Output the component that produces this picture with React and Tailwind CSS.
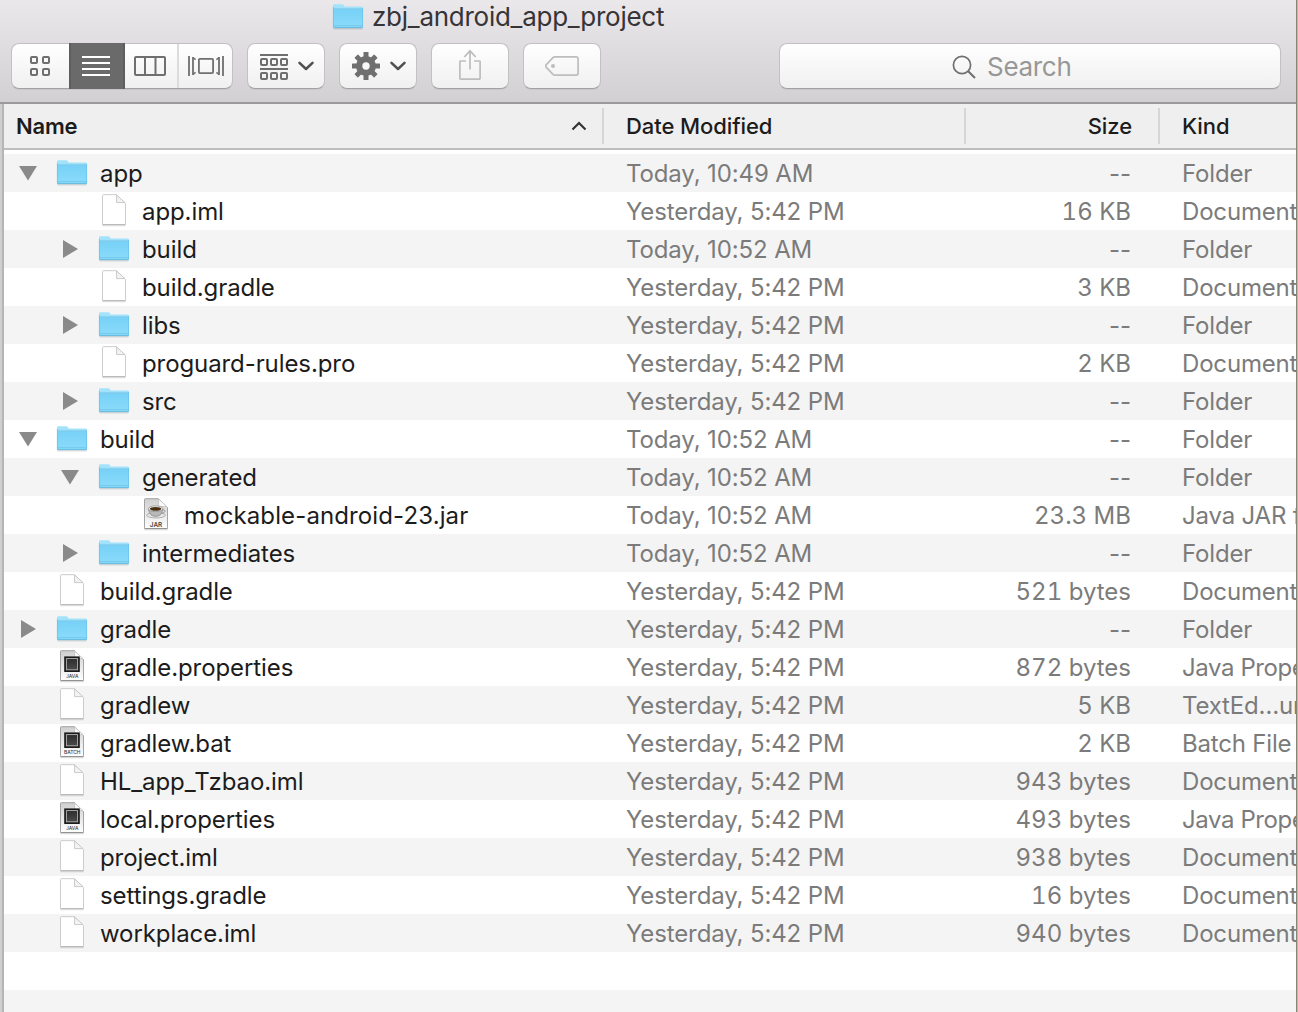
const rows = [
  [0, 'down', 'folder', 'app', 'Today, 10:49 AM', '--', 'Folder'],
  [1, '', 'file', 'app.iml', 'Yesterday, 5:42 PM', '16 KB', 'Document'],
  [1, 'right', 'folder', 'build', 'Today, 10:52 AM', '--', 'Folder'],
  [1, '', 'file', 'build.gradle', 'Yesterday, 5:42 PM', '3 KB', 'Document'],
  [1, 'right', 'folder', 'libs', 'Yesterday, 5:42 PM', '--', 'Folder'],
  [1, '', 'file', 'proguard-rules.pro', 'Yesterday, 5:42 PM', '2 KB', 'Document'],
  [1, 'right', 'folder', 'src', 'Yesterday, 5:42 PM', '--', 'Folder'],
  [0, 'down', 'folder', 'build', 'Today, 10:52 AM', '--', 'Folder'],
  [1, 'down', 'folder', 'generated', 'Today, 10:52 AM', '--', 'Folder'],
  [2, '', 'jar', 'mockable-android-23.jar', 'Today, 10:52 AM', '23.3 MB', 'Java JAR file'],
  [1, 'right', 'folder', 'intermediates', 'Today, 10:52 AM', '--', 'Folder'],
  [0, '', 'file', 'build.gradle', 'Yesterday, 5:42 PM', '521 bytes', 'Document'],
  [0, 'right', 'folder', 'gradle', 'Yesterday, 5:42 PM', '--', 'Folder'],
  [0, '', 'java', 'gradle.properties', 'Yesterday, 5:42 PM', '872 bytes', 'Java Properties'],
  [0, '', 'file', 'gradlew', 'Yesterday, 5:42 PM', '5 KB', 'TextEd…ument'],
  [0, '', 'batch', 'gradlew.bat', 'Yesterday, 5:42 PM', '2 KB', 'Batch File'],
  [0, '', 'file', 'HL_app_Tzbao.iml', 'Yesterday, 5:42 PM', '943 bytes', 'Document'],
  [0, '', 'java', 'local.properties', 'Yesterday, 5:42 PM', '493 bytes', 'Java Properties'],
  [0, '', 'file', 'project.iml', 'Yesterday, 5:42 PM', '938 bytes', 'Document'],
  [0, '', 'file', 'settings.gradle', 'Yesterday, 5:42 PM', '16 bytes', 'Document'],
  [0, '', 'file', 'workplace.iml', 'Yesterday, 5:42 PM', '940 bytes', 'Document'],
];

const indents = ['pl-0', 'pl-[42px]', 'pl-[84px]'];

function Gradients() {
  return (
    <svg className="absolute size-0" aria-hidden="true">
      <defs>
        <linearGradient id="folderFront" x1="0" y1="0" x2="0" y2="1">
          <stop offset="0" stopColor="#77d1f7" />
          <stop offset="1" stopColor="#8cdcfa" />
        </linearGradient>
        <linearGradient id="docGrey" x1="0" y1="0" x2="0" y2="1">
          <stop offset="0" stopColor="#cfcfcf" />
          <stop offset="0.65" stopColor="#efefef" />
          <stop offset="1" stopColor="#fff" />
        </linearGradient>
        <linearGradient id="chip" x1="0" y1="0" x2="0" y2="1">
          <stop offset="0" stopColor="#2c2c2c" />
          <stop offset="1" stopColor="#4a4a4a" />
        </linearGradient>
      </defs>
    </svg>
  );
}

function FolderIcon() {
  return (
    <svg width="32" height="38" viewBox="0 0 32 38" className="shrink-0">
      <path d="M1.5 30.8h29" stroke="#000" strokeOpacity=".12" strokeWidth="1.4" />
      <path d="M1 29.2V7.4Q1 6.2 2.2 6.2H10.2Q11.2 6.2 11.8 7.2L12.6 8.4H29.8Q31 8.4 31 9.6V29.2Q31 30 30 30H2Q1 30 1 29.2Z" fill="#a3e2fb" />
      <path d="M1 11.4h30V29Q31 30 30 30H2Q1 30 1 29Z" fill="url(#folderFront)" />
      <path d="M1 11h30" stroke="#69bfe4" strokeWidth=".9" />
      <path d="M1 27.7h30" stroke="#69c0e6" strokeWidth=".7" />
      <path d="M1.4 9V29M30.6 10V29" stroke="#6cc3ea" strokeWidth=".8" />
      <path d="M1.2 29.7h29.6" stroke="#5fb2d8" strokeWidth=".9" />
    </svg>
  );
}

function DocIcon({ kind }) {
  const plain = kind === 'file';
  return (
    <svg width="32" height="38" viewBox="0 0 32 38" className="shrink-0">
      <path d="M4.2 33.6h23.6" stroke="#000" strokeOpacity=".13" strokeWidth="1.4" />
      <path
        d="M4.5 3.5Q4.5 2.7 5.3 2.7H18.5L27.5 11.5V31.8Q27.5 32.6 26.7 32.6H5.3Q4.5 32.6 4.5 31.8Z"
        fill={plain ? '#fff' : 'url(#docGrey)'}
        stroke={plain ? '#c6c6c6' : '#9a9a9a'}
        strokeWidth=".9"
      />
      <path d="M4.5 32.5h23" stroke={plain ? '#b5b5b5' : '#8d8d8d'} strokeWidth=".8" />
      <path d="M18.6 3V10.6H27Z" fill={plain ? '#f3f3f3' : '#fafafa'} stroke="#c4c4c4" strokeWidth=".9" />
      {(kind === 'java' || kind === 'batch') && (
        <g>
          <rect x="8.2" y="8.4" width="15.6" height="15.6" fill="#1c1c1c" />
          <rect x="10.4" y="10.6" width="11.2" height="11.2" fill="url(#chip)" stroke="#b5b5b5" strokeWidth=".9" />
          <text x="16.2" y="30.2" textAnchor="middle" fontFamily="Inter, sans-serif" fontSize="4.9" fontWeight="500" fill="#444">
            {kind === 'java' ? 'JAVA' : 'BATCH'}
          </text>
        </g>
      )}
      {kind === 'jar' && (
        <g>
          <ellipse cx="16" cy="19.2" rx="9.4" ry="2.8" fill="#e6e6e6" stroke="#8a8a8a" strokeWidth=".6" />
          <path d="M8.600 13Q9.200 20.400 15.600 20.400Q22.200 20.400 22.600 13Z" fill="#b9b9b9" stroke="#777" strokeWidth=".6" />
          <path d="M22.500 14Q25.700 13.600 24.700 15.800Q23.900 17.300 21.700 17.400" fill="none" stroke="#8c8c8c" strokeWidth="1" />
          <ellipse cx="15.600" cy="12.700" rx="7.300" ry="2.800" fill="#f2f2f2" stroke="#777" strokeWidth=".6" />
          <ellipse cx="15.600" cy="12.800" rx="5.700" ry="1.900" fill="#4a2f10" />
          <text x="16" y="30.600" textAnchor="middle" fontFamily="Inter, sans-serif" fontSize="6.400" fontWeight="600" fill="#444">JAR</text>
        </g>
      )}
    </svg>
  );
}

function Disclosure({ state }) {
  return (
    <svg width="20" height="38" viewBox="0 0 20 38" className="shrink-0" fill="#8a8a8a">
      {state === 'down' && <path d="M0 12H18L9 26.500Z" />}
      {state === 'right' && <path d="M2 10V28L17 19Z" />}
    </svg>
  );
}

function Chevron() {
  return (
    <svg width="16" height="10" viewBox="0 0 16 10" fill="none" stroke="#4f4f4f" strokeWidth="2.500" strokeLinecap="round" strokeLinejoin="round">
      <path d="M1.500 1.800L8 8L14.500 1.800" />
    </svg>
  );
}

function GroupIcon() {
  return (
    <svg width="28" height="26" viewBox="0 0 28 26" fill="none" stroke="#6f6f6f" strokeWidth="2">
      <path d="M0 1H28M0 15H28" />
      {[0, 10, 20].map((x) => (
        <g key={x}>
          <rect x={x + 1} y="5" width="6" height="6" rx="1" />
          <rect x={x + 1} y="19" width="6" height="6" rx="1" />
        </g>
      ))}
    </svg>
  );
}

function GearIcon() {
  return (
    <svg width="28" height="28" viewBox="0 0 28 28" fill="#6f6f6f">
      {[0, 45, 90, 135].map((a) => (
        <rect key={a} x="11.500" y="0" width="5" height="28" rx=".6" transform={`rotate(${a} 14 14)`} />
      ))}
      <circle cx="14" cy="14" r="10" />
      <circle cx="14" cy="14" r="3.700" fill="#f8f8f8" />
    </svg>
  );
}

const buttonFace =
  'box-border flex h-[46px] shrink-0 items-center rounded-[8px] border border-[#c3c1c3] border-b-[#a3a2a3] bg-linear-to-b from-white to-[#f0f0f0] shadow-[0_1px_0_rgba(0,0,0,0.06)]';

function Toolbar() {
  return (
    <div className="flex h-[46px] items-center pl-[11px]">
      <div className={`${buttonFace} w-[222px]`}>
        <div className="flex h-full w-[57px] items-center justify-center pr-[1px]">
          <svg width="20" height="20" viewBox="0 0 20 20" fill="none" stroke="#6f6f6f" strokeWidth="2">
            <rect x="1" y="1" width="6" height="6" rx="1" />
            <rect x="13" y="1" width="6" height="6" rx="1" />
            <rect x="1" y="13" width="6" height="6" rx="1" />
            <rect x="13" y="13" width="6" height="6" rx="1" />
          </svg>
        </div>
        <div className="flex h-[46px] w-14 shrink-0 items-center justify-center border-x-2 border-[#5e5e5e] bg-[#6a6a6a] pr-0.5">
          <svg width="28" height="20" viewBox="0 0 28 20" stroke="#fff" strokeWidth="2">
            <path d="M0 1H28M0 7H28M0 13H28M0 19H28" />
          </svg>
        </div>
        <div className="flex h-full w-[54px] items-center justify-center border-r-2 border-[#dcdcdc] pr-0.5">
          <svg width="32" height="20" viewBox="0 0 32 20" fill="none" stroke="#6f6f6f" strokeWidth="2">
            <rect x="1" y="1" width="30" height="18" rx="1" />
            <path d="M11 1V19M21.500 1V19" />
          </svg>
        </div>
        <div className="flex h-full w-[53px] items-center justify-center pl-[1px]">
          <svg width="36" height="20" viewBox="0 0 36 20" fill="none" stroke="#6f6f6f" strokeWidth="1.800">
            <path d="M1 0V20M35 0V20M5 1V19M31 1V19" />
            <path d="M5 1.500L7.600 3.600M5 18.500L7.600 16.400M31 1.500L28.400 3.600M31 18.500L28.400 16.400" strokeWidth="1.400" />
            <rect x="10.900" y="2.900" width="14.200" height="14.200" rx="1" />
          </svg>
        </div>
      </div>
      <div className={`${buttonFace} ml-[14px] w-[78px] gap-[10px] pt-0.5 pl-[12px]`}>
        <GroupIcon />
        <div className="-mt-[2px] flex">
          <Chevron />
        </div>
      </div>
      <div className={`${buttonFace} ml-[14px] w-[78px] gap-[10px] pl-[12px]`}>
        <GearIcon />
        <Chevron />
      </div>
      <div className={`${buttonFace} ml-[14px] w-[78px] justify-center`}>
        <svg width="24" height="32" viewBox="0 0 24 32" fill="none" stroke="#bdbdbd" strokeWidth="1.700" className="-mt-0.5">
          <path d="M8 12H2.500Q1.900 12 1.900 12.600V29.500Q1.900 30.100 2.500 30.100H21.500Q22.100 30.100 22.100 29.500V12.600Q22.100 12 21.500 12H16M12 20.500V2M6.300 8L12 1.800L17.700 8" />
        </svg>
      </div>
      <div className={`${buttonFace} ml-[14px] w-[78px] justify-center`}>
        <svg width="34" height="20" viewBox="0 0 34 20" fill="none" stroke="#bdbdbd" strokeWidth="1.700">
          <path d="M10 .9H31Q33.100 .9 33.100 3V17Q33.100 19.100 31 19.100H10Q8.800 19.100 8 18.300L1.300 11.400Q.2 10 1.300 8.600L8 1.700Q8.800 .9 10 .9Z" />
          <circle cx="8" cy="10" r="2" fill="#bdbdbd" stroke="none" />
        </svg>
      </div>
      <div className={`${buttonFace} ml-[178px] w-[502px] pl-[172px]`}>
        <svg width="24" height="24" viewBox="0 0 24 24" fill="none" stroke="#6f6f6f" strokeWidth="1.700" className="mt-0.5">
          <circle cx="10" cy="10" r="8.600" />
          <path d="M16.200 16.200L23 23" strokeWidth="2" />
        </svg>
        <span className="ml-[11px] text-[26px] tracking-[-0.3px] text-[#979797]">Search</span>
      </div>
    </div>
  );
}

export default function App() {
  return (
    <div className="flex h-[1012px] w-[1298px] overflow-hidden bg-white font-['Inter',sans-serif] text-[24px] whitespace-nowrap text-[#1c1c1c]">
      <Gradients />
      <div className="flex w-[1296px] shrink-0 flex-col overflow-hidden">
        <header className="h-[104px] shrink-0 border-b-2 border-[#9b999b] bg-linear-to-b from-[#eae8ea] to-[#d2d0d2]">
          <div className="flex h-[43px] items-start pl-[332px]">
            <div className="-mt-0.5 flex h-[38px] items-center">
              <FolderIcon />
              <span className="-mt-0.5 ml-2 text-[26px] tracking-[-0.26px] text-[#363436]">zbj_android_app_project</span>
            </div>
          </div>
          <Toolbar />
        </header>
        <div className="flex min-h-0 flex-1">
          <div className="w-1 shrink-0 border-r-2 border-[#b5b5b5] bg-[#cfcfcf]" />
          <main className="flex min-w-0 flex-1 flex-col">
            <div className="flex h-[46px] shrink-0 items-center border-b-2 border-[#bdbdbd] bg-[#efefef] text-[22px] font-[450] tracking-[-0.08px]">
              <div className="flex h-9 w-[600px] shrink-0 items-center justify-between border-r-2 border-[#d6d6d6] pr-[15px] pl-3">
                <span className="font-semibold tracking-[-0.2px]">Name</span>
                <svg width="16" height="10" viewBox="0 0 16 10" fill="none" stroke="#333" strokeWidth="2.200">
                  <path d="M1.500 8.500L8 2L14.500 8.500" />
                </svg>
              </div>
              <div className="flex h-9 w-[362px] shrink-0 items-center border-r-2 border-[#d6d6d6] pl-[22px]">Date Modified</div>
              <div className="flex h-9 w-[194px] shrink-0 items-center justify-end border-r-2 border-[#d6d6d6] pr-[26px]">Size</div>
              <div className="pl-[22px]">Kind</div>
            </div>
            <div className="flex flex-col pt-1">
              {rows.map(([level, state, icon, name, date, size, kind], i) => (
                <div key={i} className="flex h-[38px] items-center overflow-hidden odd:bg-[#f4f4f4]">
                  <div className="w-[622px] shrink-0">
                    <div className={`flex items-center ${indents[level]}`}>
                      <div className="flex w-13 shrink-0 pl-[15px]">
                        <Disclosure state={state} />
                      </div>
                      {icon === 'folder' ? <FolderIcon /> : <DocIcon kind={icon} />}
                      <span className={icon === 'jar' ? 'ml-[12px] pt-0.5 tracking-[0.12px]' : 'ml-[12px] pt-0.5 tracking-[-0.09px]'}>{name}</span>
                    </div>
                  </div>
                  <div className="w-[338px] shrink-0 pt-0.5 tracking-[-0.12px] text-[#7b7b7b]">{date}</div>
                  <div className={size === '--' ? 'w-[167px] shrink-0 pt-0.5 text-right text-[#7b7b7b]' : 'w-[167px] shrink-0 pt-0.5 text-right text-[#7b7b7b] tabular-nums'}>{size}</div>
                  <div className={icon === 'java' ? 'ml-[51px] pt-0.5 tracking-[-0.4px] text-[#7b7b7b]' : 'ml-[51px] pt-0.5 tracking-[-0.18px] text-[#7b7b7b]'}>{kind}</div>
                </div>
              ))}
              <div className="h-[38px]" />
              <div className="h-[38px] bg-[#f4f4f4]" />
            </div>
          </main>
        </div>
      </div>
      <div className="w-0.5 shrink-0 border-l border-[#8a8778] bg-[#b9b6a8]" />
    </div>
  );
}
